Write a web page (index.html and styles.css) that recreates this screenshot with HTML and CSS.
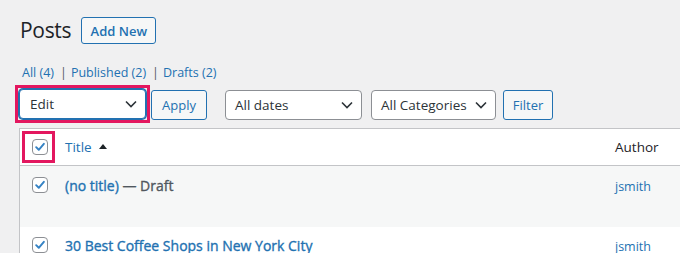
FILE: index.html
```html
<!DOCTYPE html>
<html>
<head>
<meta charset="utf-8">
<link rel="stylesheet" href="styles.css">
</head>
<body>
<div class="wrap">
  <div class="head">
    <h1 class="title">Posts</h1>
    <a class="btn add">Add New</a>
  </div>
  <ul class="subsub">
    <li><a>All <span class="count">(4)</span></a></li>
    <li class="sep">|</li>
    <li><a>Published <span class="count">(2)</span></a></li>
    <li class="sep">|</li>
    <li><a>Drafts <span class="count">(2)</span></a></li>
  </ul>
  <div class="tablenav">
    <div class="hl hl-select">
      <div class="select sel-edit"><span>Edit</span><svg class="chev" viewBox="0 0 12 8"><path d="M1 1.5 L6 6.5 L11 1.5" fill="none" stroke="#2c3338" stroke-width="1.6"/></svg></div>
    </div>
    <a class="btn apply">Apply</a>
    <div class="select sel-dates"><span>All dates</span><svg class="chev" viewBox="0 0 12 8"><path d="M1 1.5 L6 6.5 L11 1.5" fill="none" stroke="#2c3338" stroke-width="1.6"/></svg></div>
    <div class="select sel-cats"><span>All Categories</span><svg class="chev" viewBox="0 0 12 8"><path d="M1 1.5 L6 6.5 L11 1.5" fill="none" stroke="#2c3338" stroke-width="1.6"/></svg></div>
    <a class="btn filter">Filter</a>
  </div>
  <div class="table">
    <div class="row thead">
      <div class="cell cb"><span class="check"><svg viewBox="0 0 16 16"><path d="M3.6 8.2 L6.6 11.2 L12.4 4.4" fill="none" stroke="#3582c4" stroke-width="2.2" stroke-linecap="round" stroke-linejoin="round"/></svg></span><span class="hl hl-cb"></span></div>
      <div class="cell col-title"><a class="sort">Title</a><span class="arrow"></span></div>
      <div class="cell col-author head-author">Author</div>
    </div>
    <div class="row alt r1">
      <div class="cell cb"><span class="check"><svg viewBox="0 0 16 16"><path d="M3.6 8.2 L6.6 11.2 L12.4 4.4" fill="none" stroke="#3582c4" stroke-width="2.2" stroke-linecap="round" stroke-linejoin="round"/></svg></span></div>
      <div class="cell col-title"><a class="ptitle">(no title)</a><span class="state"> — Draft</span></div>
      <div class="cell col-author"><a class="author">jsmith</a></div>
    </div>
    <div class="row r2">
      <div class="cell cb"><span class="check"><svg viewBox="0 0 16 16"><path d="M3.6 8.2 L6.6 11.2 L12.4 4.4" fill="none" stroke="#3582c4" stroke-width="2.2" stroke-linecap="round" stroke-linejoin="round"/></svg></span></div>
      <div class="cell col-title"><a class="ptitle">30 Best Coffee Shops in New York City</a></div>
      <div class="cell col-author"><a class="author">jsmith</a></div>
    </div>
  </div>
</div>
</body>
</html>
```
FILE: styles.css
```css
html, body {
  margin: 0;
  padding: 0;
  background: #f0f0f1;
  overflow: hidden;
  width: 680px;
  height: 253px;
}
body {
  font-family: "Open Sans", "Noto Sans", sans-serif;
  color: #3c434a;
  font-size: 13px;
}
.wrap {
  padding-left: 20px;
}
.head {
  display: flex;
  align-items: center;
  margin-top: 17px;
  height: 27px;
}
.title {
  margin: 0;
  font-size: 21px;
  font-weight: 400;
  color: #1d2327;
  line-height: 27px;
  letter-spacing: -0.3px;
}
.btn {
  box-sizing: border-box;
  display: flex;
  align-items: center;
  justify-content: center;
  border: 1px solid #2271b1;
  border-radius: 3px;
  background: #f6f7f7;
  color: #2271b1;
  font-size: 13px;
  cursor: pointer;
}
.add {
  margin-left: 10px;
  width: 75px;
  height: 27px;
  font-weight: 600;
}
.subsub {
  list-style: none;
  margin: 0;
  padding: 0;
  display: flex;
  margin-top: 18px;
  height: 20px;
  align-items: center;
  font-size: 12.5px;
  margin-left: 2px;
}
.subsub a {
  color: #2271b1;
}
.subsub .sep {
  color: #50575e;
  margin: 0 4px 0 6px;
}
.tablenav {
  display: flex;
  align-items: center;
  margin-top: 3px;
  margin-left: -5px;
  height: 38px;
}
.hl {
  box-sizing: border-box;
  border: 3px solid #e3175f;
}
.hl-select {
  padding: 1px;
  width: 135px;
  height: 38px;
}
.select {
  box-sizing: border-box;
  display: flex;
  align-items: center;
  justify-content: space-between;
  height: 30px;
  border: 1px solid #8c8f94;
  border-radius: 4px;
  background: #fff;
  color: #2c3338;
  font-size: 13.5px;
  padding: 0 8px 0 9px;
}
.sel-edit {
  width: 127px;
  border-color: #2271b1;
  box-shadow: 0 0 0 1px #2271b1;
  padding-left: 10px;
}
.chev {
  width: 12px;
  height: 8px;
}
.apply {
  margin-left: 1px;
  width: 56px;
  height: 30px;
  margin-top: 2px;
}
.sel-dates {
  margin-left: 18px;
  width: 137px;
  margin-top: 2px;
}
.sel-cats {
  margin-left: 9px;
  width: 125px;
  margin-top: 2px;
}
.filter {
  margin-left: 7px;
  width: 50px;
  height: 30px;
  margin-top: 2px;
}
.table {
  margin-top: 5px;
  margin-left: -1px;
  width: 720px;
  border: 1px solid #c3c4c7;
  background: #fff;
}
.row {
  display: flex;
  align-items: flex-start;
}
.thead {
  height: 36px;
  border-bottom: 1px solid #c3c4c7;
  align-items: center;
}
.alt {
  background: #f6f7f7;
}
.r1 {
  height: 61px;
}
.r2 {
  height: 40px;
}
.cell {
  box-sizing: border-box;
}
.cb {
  width: 45px;
  padding-left: 12px;
  position: relative;
  display: flex;
}
.r1 .cb, .r1 .col-title, .r1 .col-author {
  padding-top: 11px;
}
.r2 .cb, .r2 .col-title, .r2 .col-author {
  padding-top: 10px;
}
.check {
  box-sizing: border-box;
  width: 16px;
  height: 16px;
  border: 1px solid #8c8f94;
  border-radius: 4px;
  background: #fff;
  display: block;
}
.check svg {
  display: block;
  width: 14px;
  height: 14px;
}
.hl-cb {
  position: absolute;
  left: 2px;
  top: -8px;
  width: 33px;
  height: 32px;
}
.col-title {
  width: 550px;
  display: flex;
  align-items: center;
  line-height: 18px;
}
.col-author {
  flex: 1;
  line-height: 18px;
}
.sort {
  color: #2271b1;
  font-size: 13.5px;
}
.arrow {
  width: 0;
  height: 0;
  border-left: 4px solid transparent;
  border-right: 4px solid transparent;
  border-bottom: 5px solid #1d2327;
  margin-left: 7px;
  margin-top: -2px;
}
.head-author {
  color: #1d2327;
  font-size: 13.5px;
}
.ptitle {
  color: #2271b1;
  font-weight: 400;
  font-size: 14px;
  -webkit-text-stroke: 0.35px #2271b1;
}
.state {
  color: #50575e;
  font-weight: 400;
  font-size: 14px;
  white-space: pre;
  -webkit-text-stroke: 0.35px #50575e;
}
.author {
  color: #2271b1;
  font-size: 12.5px;
}
```
